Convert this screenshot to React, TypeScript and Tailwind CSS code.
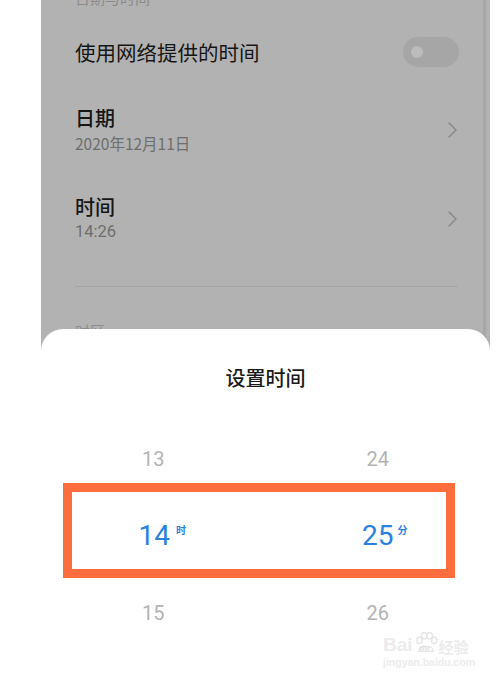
import React from "react";

const cjk = { fontFamily: '"Noto Sans CJK SC", "Noto Sans", sans-serif' };
const num = { fontFamily: 'Roboto, "Noto Sans CJK SC", sans-serif' };
const lib = { fontFamily: '"Liberation Sans", "Noto Sans CJK SC", sans-serif' };

function Chevron() {
  return (
    <svg width="11" height="18" viewBox="0 0 11 18" fill="none">
      <path d="M2 2 L9 9 L2 16" stroke="#8a8a8a" strokeWidth="1.5" strokeLinecap="round" strokeLinejoin="round" />
    </svg>
  );
}

function PickerRow({ a, b, active }: { a: string; b: string; active?: boolean }) {
  if (active) {
    return (
      <div className="grid grid-cols-2 h-[77px] items-center">
        <div className="flex justify-center">
          <span className="relative inline-block text-[28px] leading-none text-[#2a7fe0] pl-[2px]" style={num}>
            {a}
            <span className="absolute left-full top-[3px] ml-[6px] text-[10px] font-bold leading-none" style={cjk}>时</span>
          </span>
        </div>
        <div className="flex justify-center">
          <span className="relative inline-block text-[28px] leading-none text-[#2a7fe0]" style={num}>
            {b}
            <span className="absolute left-full top-[3px] ml-[4px] text-[10px] font-bold leading-none" style={cjk}>分</span>
          </span>
        </div>
      </div>
    );
  }
  return (
    <div className="grid grid-cols-2 h-[77px] items-center text-[20px] text-[#b3b3b3]" style={num}>
      <div className="text-center">{a}</div>
      <div className="text-center">{b}</div>
    </div>
  );
}

export default function App() {
  return (
    <div className="relative w-[499px] h-[687px] overflow-hidden bg-white" style={cjk}>
      <div className="ml-[41px] w-[449px] h-full flex bg-[#b2b2b2]">
        <div className="w-[442px] flex flex-col pl-[34px] pr-[25px]">
          <div className="-mt-[12px] h-[20px] text-[15px] leading-[20px] text-[#8c8c8c]">日期与时间</div>
          <div className="h-[88px] flex items-center justify-between">
            <span className="text-[20.5px] leading-none text-[#161616]">使用网络提供的时间</span>
            <div className="relative w-[56px] h-[30px] rounded-full bg-[#a6a6a6] -mr-[1px]">
              <div className="absolute left-[8px] top-[9px] w-[12px] h-[12px] rounded-full bg-[#bcbcbc]" />
            </div>
          </div>
          <div className="pt-[9px] flex items-center justify-between">
            <div className="flex flex-col">
              <span className="text-[20px] leading-[26px] text-[#161616] font-medium">日期</span>
              <span className="mt-[1px] text-[15.5px] leading-[22px] text-[#6e6e6e]">2020年12月11日</span>
            </div>
            <Chevron />
          </div>
          <div className="pt-[40px] flex items-center justify-between">
            <div className="flex flex-col">
              <span className="text-[20px] leading-[26px] text-[#161616] font-medium">时间</span>
              <span className="mt-[1px] text-[16.5px] leading-[22px] text-[#6e6e6e]" style={num}>14:26</span>
            </div>
            <Chevron />
          </div>
          <div className="mt-[43px] h-px bg-[#a5a5a5]" />
          <div className="mt-[34px] text-[15px] leading-[20px] text-[#8c8c8c]">时区</div>
        </div>
        <div className="w-[3px] bg-[#a7a7a7]" />
        <div className="w-[4px]" />
      </div>

      <div className="absolute left-[41px] bottom-0 w-[449px] h-[358px] rounded-t-[22px] bg-white flex flex-col">
        <div className="pt-[35px] h-[63px] text-center text-[20px] leading-[28px] font-medium text-[#1a1a1a]">设置时间</div>
        <div className="h-[28px]" />
        <PickerRow a="13" b="24" />
        <PickerRow a="14" b="25" active />
        <PickerRow a="15" b="26" />
      </div>

      <div className="absolute left-[63px] top-[483px] w-[392px] h-[95px] border-[9px] border-[#fd6d3d]" />

      <div className="absolute left-[383px] top-[632px] w-[88px] flex flex-col items-start text-[#ececec] select-none">
        <div className="flex items-end">
          <span className="text-[19px] leading-none font-bold" style={lib}>Bai</span>
          <span className="relative inline-block w-[24px] h-[22px] ml-[1px]">
            <svg width="24" height="22" viewBox="0 0 26 24" fill="none" stroke="#e6e6e6" strokeWidth="1.5">
              <ellipse cx="6" cy="9" rx="3" ry="3.5" />
              <ellipse cx="11" cy="4" rx="3" ry="3.5" />
              <ellipse cx="17" cy="4" rx="3" ry="3.5" />
              <ellipse cx="22" cy="9" rx="3" ry="3.5" />
              <path d="M5 21 C5 14 21 14 21 21 Z" />
            </svg>
            <span className="absolute left-[6px] top-[12px] text-[8px] leading-none font-bold text-[#e2e2e2]" style={lib}>du</span>
          </span>
          <span className="ml-[1px] text-[15px] leading-none font-bold" style={cjk}>经验</span>
        </div>
        <span className="mt-[3px] text-[10.5px] leading-none font-bold" style={lib}>jingyan.baidu.com</span>
      </div>
    </div>
  );
}
